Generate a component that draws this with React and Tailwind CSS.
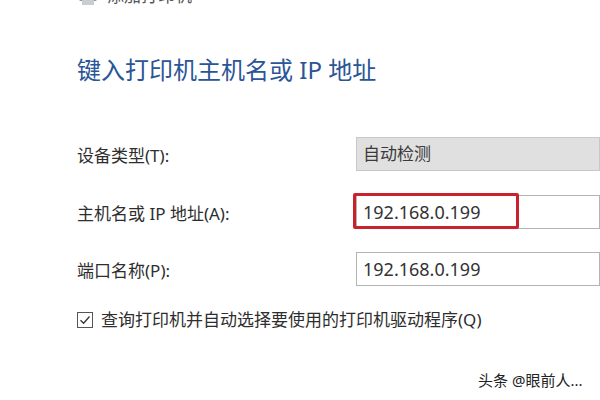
import React from 'react';

const font = { fontFamily: '"Noto Sans", "Noto Sans CJK SC", sans-serif' };

const Field = ({ value, gray, highlight }) => (
    <div
        className={`relative h-[34px] w-[300px] flex items-center pl-[6px] border ${gray ? 'bg-[#e0e0e0] border-[#c8c8c8] text-[#3a3a3a]' : 'bg-white border-[#b4b4b4] text-[#333]'}`}
    >
        <span className={gray ? 'text-[17px]' : 'text-[18px]'}>{value}</span>
        {highlight && (
            <div className="absolute -left-[4px] -top-[3px] w-[166px] h-[36px] border-[3px] border-[#c8222c] rounded-[2px]" />
        )}
    </div>
);

const Row = ({ label, children, className }) => (
    <div className={`flex items-center ${className}`}>
        <div className="w-[279px] shrink-0 text-[17px] text-[#2e2e2e] pt-[4px]">{label}</div>
        {children}
    </div>
);

export default function App() {
    return (
        <div className="relative w-[600px] h-[400px] bg-white overflow-hidden" style={font}>
            <div className="pl-[77px]">
                {/* dialog header, scrolled mostly out of view */}
                <div className="-mt-[13px] h-[18px] flex items-center gap-[8px] text-[17px] text-[#555]">
                    <svg width="22" height="18" viewBox="0 0 22 18">
                        <rect x="2" y="4" width="18" height="10" rx="2" fill="#8a8f96" />
                        <rect x="5" y="12" width="12" height="6" fill="#c9ccd0" />
                    </svg>
                    <span>添加打印机</span>
                </div>

                <h1 className="mt-[49px] h-[32px] leading-[32px] text-[24px] text-[#2a5596] font-normal">
                    键入打印机主机名或 IP 地址
                </h1>

                <Row label="设备类型(T):" className="mt-[51px]">
                    <Field value="自动检测" gray />
                </Row>

                <Row label="主机名或 IP 地址(A):" className="mt-[24px]">
                    <Field value="192.168.0.199" highlight />
                </Row>

                <Row label="端口名称(P):" className="mt-[23px]">
                    <Field value="192.168.0.199" />
                </Row>

                <div className="mt-[21px] flex items-center gap-[8px] text-[17px] text-[#2e2e2e]">
                    <div className="w-[16px] h-[16px] border border-[#555] bg-white flex items-center justify-center">
                        <svg width="12" height="12" viewBox="0 0 12 12">
                            <path d="M1.5 6.2 L4.6 9.2 L10.5 2.5" fill="none" stroke="#333" strokeWidth="1.3" />
                        </svg>
                    </div>
                    <span>查询打印机并自动选择要使用的打印机驱动程序(Q)</span>
                </div>
            </div>

            {/* watermark */}
            <div className="absolute left-[478px] top-[369px] text-[15px] text-[#222]" style={{ textShadow: '0 0 2px #fff' }}>
                头条 @眼前人...
            </div>
        </div>
    );
}
